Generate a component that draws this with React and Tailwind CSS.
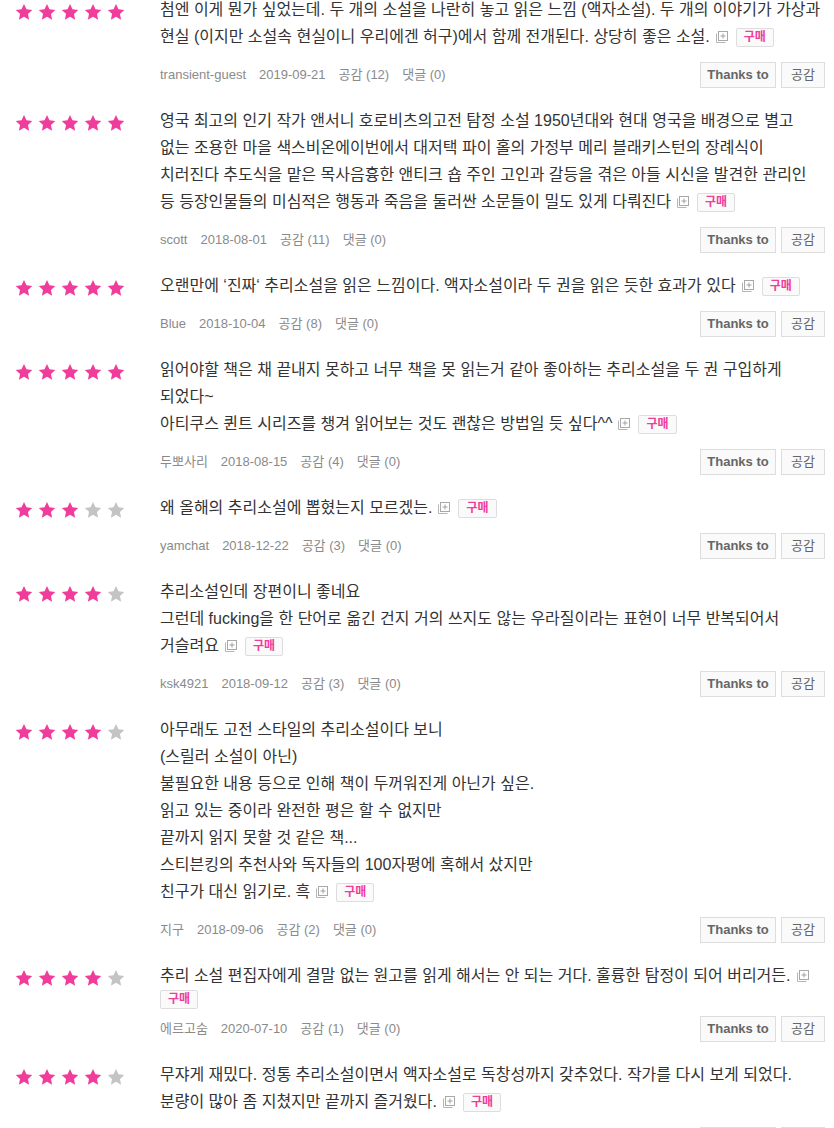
import React from 'react';

const reviews = [
  {
    stars: 5,
    lines: ['첨엔 이게 뭔가 싶었는데. 두 개의 소설을 나란히 놓고 읽은 느낌 (액자소설). 두 개의 이야기가 가상과 현실 (이지만 소설속 현실이니 우리에겐 허구)에서 함께 전개된다. 상당히 좋은 소설.'],
    user: 'transient-guest',
    date: '2019-09-21',
    likes: 12,
  },
  {
    stars: 5,
    lines: ['영국 최고의 인기 작가 앤서니 호로비츠의고전 탐정 소설 1950년대와 현대 영국을 배경으로 별고 없는 조용한 마을 색스비온에이번에서 대저택 파이 홀의 가정부 메리 블래키스턴의 장례식이 치러진다 추도식을 맡은 목사음흉한 앤티크 숍 주인 고인과 갈등을 겪은 아들 시신을 발견한 관리인 등 등장인물들의 미심적은 행동과 죽음을 둘러싼 소문들이 밀도 있게 다뤄진다'],
    user: 'scott',
    date: '2018-08-01',
    likes: 11,
  },
  {
    stars: 5,
    lines: ['오랜만에 ‘진짜‘ 추리소설을 읽은 느낌이다. 액자소설이라 두 권을 읽은 듯한 효과가 있다'],
    user: 'Blue',
    date: '2018-10-04',
    likes: 8,
  },
  {
    stars: 5,
    lines: [
      '읽어야할 책은 채 끝내지 못하고 너무 책을 못 읽는거 같아 좋아하는 추리소설을 두 권 구입하게 되었다~',
      '아티쿠스 퀸트 시리즈를 챙겨 읽어보는 것도 괜찮은 방법일 듯 싶다^^',
    ],
    user: '두뽀사리',
    date: '2018-08-15',
    likes: 4,
  },
  {
    stars: 3,
    lines: ['왜 올해의 추리소설에 뽑혔는지 모르겠는.'],
    user: 'yamchat',
    date: '2018-12-22',
    likes: 3,
  },
  {
    stars: 4,
    lines: [
      '추리소설인데 장편이니 좋네요',
      '그런데 fucking을 한 단어로 옮긴 건지 거의 쓰지도 않는 우라질이라는 표현이 너무 반복되어서 거슬려요',
    ],
    user: 'ksk4921',
    date: '2018-09-12',
    likes: 3,
  },
  {
    stars: 4,
    lines: [
      '아무래도 고전 스타일의 추리소설이다 보니',
      '(스릴러 소설이 아닌)',
      '불필요한 내용 등으로 인해 책이 두꺼워진게 아닌가 싶은.',
      '읽고 있는 중이라 완전한 평은 할 수 없지만',
      '끝까지 읽지 못할 것 같은 책...',
      '스티븐킹의 추천사와 독자들의 100자평에 혹해서 샀지만',
      '친구가 대신 읽기로. 흑',
    ],
    user: '지구',
    date: '2018-09-06',
    likes: 2,
  },
  {
    stars: 4,
    lines: ['추리 소설 편집자에게 결말 없는 원고를 읽게 해서는 안 되는 거다. 훌륭한 탐정이 되어 버리거든.'],
    tagBelow: true,
    user: '에르고숨',
    date: '2020-07-10',
    likes: 1,
  },
  {
    stars: 4,
    lines: [
      '무쟈게 재밌다. 정통 추리소설이면서 액자소설로 독창성까지 갖추었다. 작가를 다시 보게 되었다.',
      '분량이 많아 좀 지쳤지만 끝까지 즐거웠다.',
    ],
    user: '무명',
    date: '2019-01-01',
    likes: 0,
  },
];

function Star({ on }) {
  return (
    <svg width="18" height="18" viewBox="0 0 24 24" className={on ? 'text-[#f03c9b]' : 'text-[#c4c4c4]'}>
      <path
        fill="currentColor"
        d="M12 1.2l3.3 7.1 7.7.9-5.7 5.3 1.5 7.7L12 18.4l-6.8 3.8 1.5-7.7L1 9.2l7.7-.9z"
      />
    </svg>
  );
}

function ExpandIcon() {
  return (
    <svg width="12" height="12" viewBox="0 0 12 12" className="inline-block ml-[6px] mr-[8px] align-[-1px]">
      <path d="M0.5 2.5v9h9" fill="none" stroke="#b5b5b5" strokeWidth="1" />
      <rect x="2.5" y="0.5" width="9" height="9" fill="white" stroke="#a8a8a8" strokeWidth="1" />
      <path d="M7 2.5v5M4.5 5h5" stroke="#a0a0a0" strokeWidth="1" />
    </svg>
  );
}

function BuyTag() {
  return (
    <span className="inline-block align-[1px] border border-[#ddd] bg-[#fafafa] rounded-[2px] px-[7px] h-[19px] leading-[17px] text-[12px] font-bold text-[#f03c9b]">
      구매
    </span>
  );
}

function ReviewRow({ review }) {
  const last = review.lines.length - 1;
  return (
    <div className="flex pb-[19px]">
      <div className="w-[160px] shrink-0 pl-[15px] pt-[7px] flex gap-[5px] h-fit">
        {[1, 2, 3, 4, 5].map((n) => (
          <Star key={n} on={n <= review.stars} />
        ))}
      </div>
      <div className="flex-1 pr-[9px]">
        <div className="text-[16px] leading-[27px] text-[#333] break-keep">
          {review.lines.map((line, i) => (
            <div key={i}>
              {line}
              {i === last && <ExpandIcon />}
              {i === last && !review.tagBelow && <BuyTag />}
            </div>
          ))}
          {review.tagBelow && (
            <div className="mt-[1px] h-[19px] flex">
              <BuyTag />
            </div>
          )}
        </div>
        <div className={`flex items-center justify-between ${review.tagBelow ? 'mt-[7px]' : 'mt-[12px]'}`}>
          <div className="flex gap-[13px] text-[13px] text-[#8a8a8a]">
            <span>{review.user}</span>
            <span>{review.date}</span>
            <span>공감 ({review.likes})</span>
            <span>댓글 (0)</span>
          </div>
          <div className="flex gap-[5px]">
            <button className="h-[26px] w-[76px] border border-[#ddd] bg-[#fafafa] text-[13px] font-bold text-[#666]">
              Thanks to
            </button>
            <button className="h-[26px] w-[44px] border border-[#ddd] bg-[#fafafa] text-[13px] text-[#666]">
              공감
            </button>
          </div>
        </div>
      </div>
    </div>
  );
}

export default function App() {
  return (
    <div
      className="w-[834px] h-[1128px] overflow-hidden bg-white"
      style={{ fontFamily: '"Liberation Sans", "Noto Sans CJK KR", sans-serif' }}
    >
      <div className="-mt-[4px]">
        {reviews.map((r, i) => (
          <ReviewRow key={i} review={r} />
        ))}
      </div>
    </div>
  );
}
